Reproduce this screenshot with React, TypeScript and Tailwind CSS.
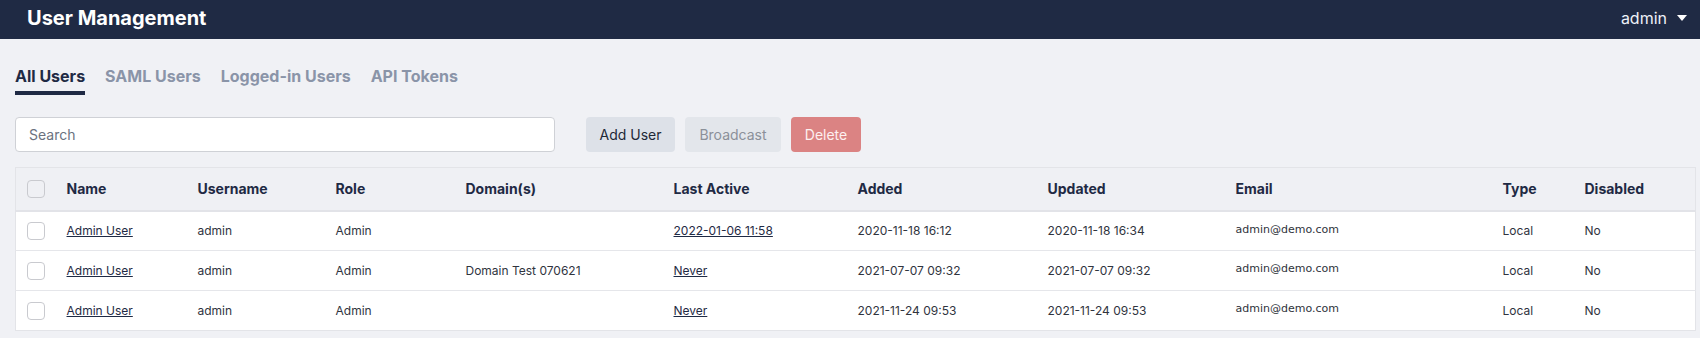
import React from 'react';

type User = {
  name: string;
  username: string;
  role: string;
  domain: string;
  lastActive: string;
  added: string;
  updated: string;
  email: string;
  type: string;
  disabled: string;
};

const users: User[] = [
  {
    name: 'Admin User',
    username: 'admin',
    role: 'Admin',
    domain: '',
    lastActive: '2022-01-06 11:58',
    added: '2020-11-18 16:12',
    updated: '2020-11-18 16:34',
    email: 'admin@demo.com',
    type: 'Local',
    disabled: 'No',
  },
  {
    name: 'Admin User',
    username: 'admin',
    role: 'Admin',
    domain: 'Domain Test 070621',
    lastActive: 'Never',
    added: '2021-07-07 09:32',
    updated: '2021-07-07 09:32',
    email: 'admin@demo.com',
    type: 'Local',
    disabled: 'No',
  },
  {
    name: 'Admin User',
    username: 'admin',
    role: 'Admin',
    domain: '',
    lastActive: 'Never',
    added: '2021-11-24 09:53',
    updated: '2021-11-24 09:53',
    email: 'admin@demo.com',
    type: 'Local',
    disabled: 'No',
  },
];

const tabs = ['All Users', 'SAML Users', 'Logged-in Users', 'API Tokens'];

function Checkbox({ header }: { header?: boolean }) {
  return (
    <span
      className={`block w-[18px] h-[18px] rounded-[4px] border border-[#c9cacf] ${header ? 'bg-[#eff0f4]' : 'bg-white'}`}
    />
  );
}

export default function App() {
  return (
    <div className="min-h-[338px] bg-[#f0f1f5] font-['Inter',sans-serif] text-[#30343e]">
      <header className="h-[39px] bg-[#1f2a44] flex items-center justify-between pl-[27px] pr-[13px]">
        <h1 className="text-[20px] font-bold text-white leading-none pb-[4px]">User Management</h1>
        <button className="flex items-center gap-[10px] text-[16px] text-[#eef1f8] pb-[4px]">
          admin
          <svg width="10" height="6" viewBox="0 0 10 6" className="fill-white">
            <path d="M0 0h10L5 6z" />
          </svg>
        </button>
      </header>

      <div className="pl-[15px] pr-[4px]">
        <nav className="flex gap-[20px] pt-[27px]">
          {tabs.map((t, i) => (
            <div key={t} className="flex flex-col">
              <span className={`text-[16px] font-bold leading-[20px] ${i === 0 ? 'text-[#1f2a44]' : 'text-[#8a94a8]'}`}>
                {t}
              </span>
              <span className={`mt-[5px] h-[4px] ${i === 0 ? 'bg-[#1f2a44]' : 'bg-transparent'}`} />
            </div>
          ))}
        </nav>

        <div className="flex items-center mt-[22px]">
          <input
            placeholder="Search"
            className="w-[540px] h-[35px] rounded-[4px] border border-[#cfd1d6] bg-white px-[13px] text-[14px] placeholder:text-[#6b7280] outline-none"
          />
          <div className="flex gap-[10px] ml-[31px]">
            <button className="w-[89px] h-[35px] rounded-[4px] bg-[#dde1e8] text-[14px] text-[#1f2937]">Add User</button>
            <button className="w-[96px] h-[35px] rounded-[4px] bg-[#e3e6eb] text-[14px] text-[#8b9099]">Broadcast</button>
            <button className="w-[70px] h-[35px] rounded-[4px] bg-[#db8383] text-[14px] text-[#fdf0f0]">Delete</button>
          </div>
        </div>

        <table className="mt-[15px] w-full table-fixed border-collapse border border-[#e3e4e8] text-left">
          <thead className="bg-[#eff0f4]">
            <tr className="h-[43px] border-b-2 border-[#e2e3e8] text-[14px] font-bold text-[#1f2a44]">
              <th className="w-[51px] pl-[11px]"><Checkbox header /></th>
              <th className="w-[131px] font-bold">Name</th>
              <th className="w-[138px] font-bold">Username</th>
              <th className="w-[130px] font-bold">Role</th>
              <th className="w-[208px] font-bold">Domain(s)</th>
              <th className="w-[184px] font-bold">Last Active</th>
              <th className="w-[190px] font-bold">Added</th>
              <th className="w-[188px] font-bold">Updated</th>
              <th className="w-[267px] font-bold">Email</th>
              <th className="w-[82px] font-bold">Type</th>
              <th className="font-bold">Disabled</th>
            </tr>
          </thead>
          <tbody className="bg-white text-[12px]">
            {users.map((u, i) => (
              <tr key={i} className={`h-[40px] ${i < users.length - 1 ? 'border-b border-[#e5e6ea]' : ''}`}>
                <td className="pl-[11px]"><Checkbox /></td>
                <td><a href="#" className="underline text-[#1f2a44]">{u.name}</a></td>
                <td>{u.username}</td>
                <td>{u.role}</td>
                <td>{u.domain}</td>
                <td><a href="#" className="underline text-[#1f2a44]">{u.lastActive}</a></td>
                <td>{u.added}</td>
                <td>{u.updated}</td>
                <td className="font-['DejaVu_Sans',sans-serif] text-[11px] pb-[2px] text-[#2f333b]">{u.email}</td>
                <td>{u.type}</td>
                <td>{u.disabled}</td>
              </tr>
            ))}
          </tbody>
        </table>
      </div>
    </div>
  );
}
